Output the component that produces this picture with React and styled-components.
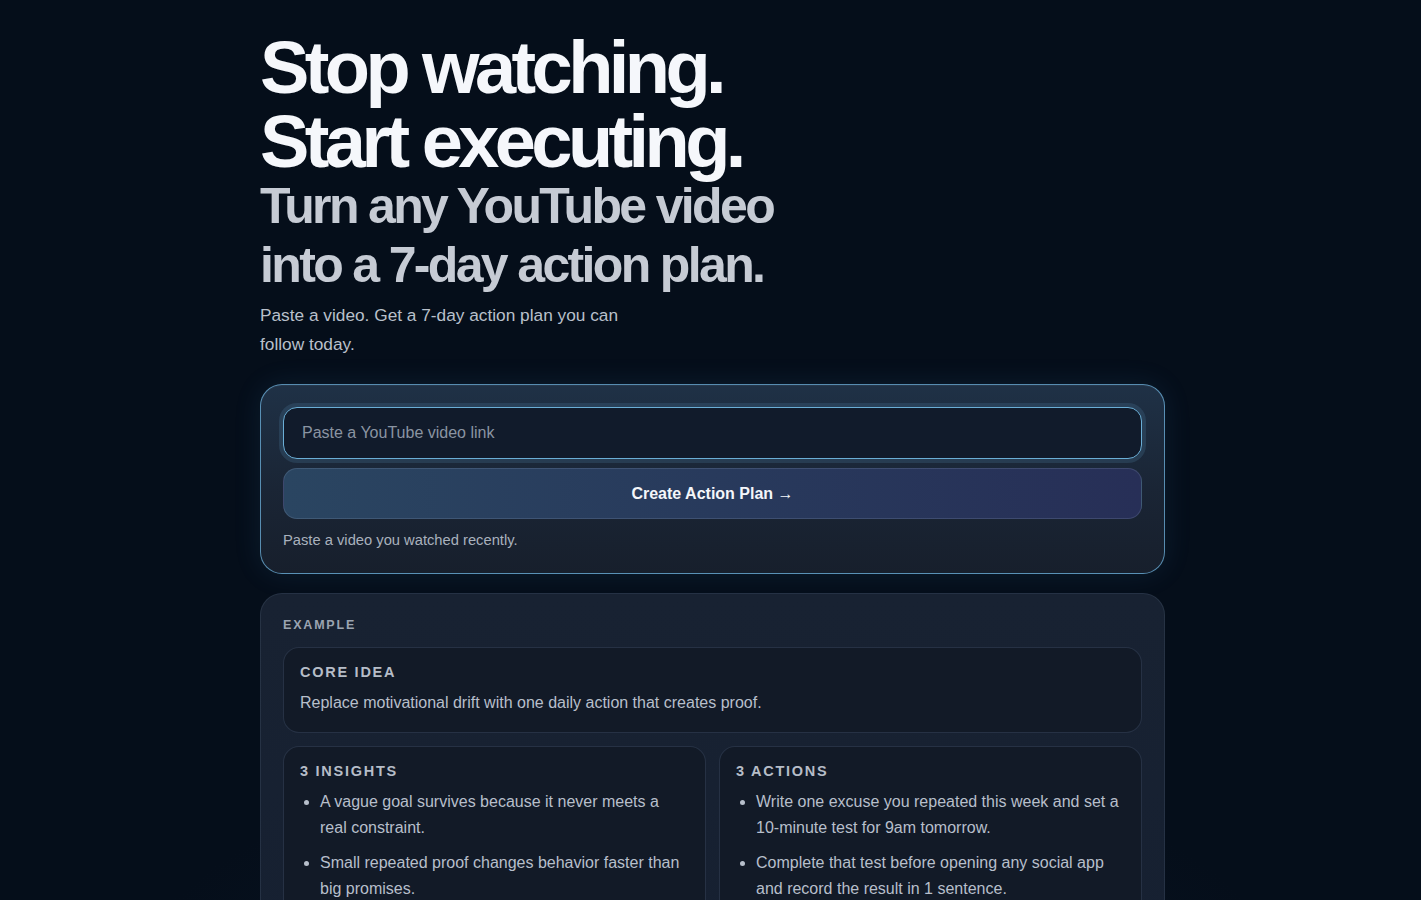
import React from "react";
import styled, { createGlobalStyle } from "styled-components";

const GlobalStyle = createGlobalStyle`
  * { box-sizing: border-box; }
  html, body {
    margin: 0;
    padding: 0;
    background: #050e1a;
    font-family: "Liberation Sans", Arial, sans-serif;
    color: #f5f7fb;
  }
`;

const Page = styled.main`
  min-height: 100vh;
  background: radial-gradient(ellipse 60% 40% at 50% 100%, #0a1727 0%, #050e1a 70%);
  padding: 31px 0 40px;
`;

const Wrap = styled.div`
  width: 905px;
  margin-left: calc(50% - 450.5px);
`;

const Headline = styled.h1`
  margin: 0;
  font-size: 74px;
  line-height: 1;
  font-weight: 700;
  letter-spacing: -0.062em;
  color: #f5f7fb;
`;

const Subhead = styled.h2`
  margin: -2px 0 0;
  font-size: 50px;
  line-height: 59px;
  font-weight: 700;
  letter-spacing: -0.053em;
  color: #c6cbd4;
`;

const Lead = styled.p`
  margin: 6px 0 0;
  max-width: 385px;
  font-size: 17.28px;
  line-height: 29px;
  color: #b9c0cb;
`;

const Panel = styled.section`
  margin-top: 25px;
  border-radius: 22px;
  border: 1px solid ${({ $glow }) => ($glow ? "rgba(110, 178, 220, 0.75)" : "rgba(120, 140, 170, 0.16)")};
  background: ${({ $glow }) =>
    $glow
      ? "linear-gradient(180deg, #1f3146 0%, #1a2535 55%, #171f2c 100%)"
      : "linear-gradient(180deg, #182232 0%, #162031 100%)"};
  box-shadow: ${({ $glow }) =>
    $glow ? "0 0 28px rgba(70, 140, 200, 0.12), inset 0 1px 0 rgba(255,255,255,0.04)" : "none"};
  padding: ${({ $glow }) => ($glow ? "22px 22px 24px" : "22px 22px 0")};
  & + & {
    margin-top: 19px;
  }
`;

const Form = styled.form`
  display: flex;
  flex-direction: column;
  gap: 9px;
`;

const UrlInput = styled.input`
  height: 52px;
  width: 100%;
  border-radius: 14px;
  border: 1px solid #6aaed6;
  background: #111b2b;
  box-shadow: 0 0 0 4px rgba(80, 130, 170, 0.22);
  padding: 0 18px;
  font-family: inherit;
  font-size: 16px;
  color: #e6ebf2;
  outline: none;
  caret-color: #e6ebf2;
  &::placeholder {
    color: #8a94a2;
  }
`;

const Submit = styled.button`
  height: 51px;
  border-radius: 14px;
  border: 1px solid rgba(150, 170, 200, 0.2);
  background: linear-gradient(90deg, #2a4561 0%, #283a5c 50%, #272f57 100%);
  color: #f4f6fa;
  font-family: inherit;
  font-size: 16px;
  font-weight: 700;
  cursor: pointer;
`;

const Hint = styled.p`
  margin: 12px 0 0;
  font-size: 14.72px;
  line-height: 18px;
  color: #a9b1bd;
`;

const Label = styled.div`
  font-size: ${({ $size }) => $size || "12.5px"};
  font-weight: 700;
  letter-spacing: ${({ $spacing }) => $spacing || "0.145em"};
  text-transform: uppercase;
  color: ${({ $color }) => $color || "#9ba4b1"};
  line-height: 18px;
`;

const Stack = styled.div`
  display: flex;
  flex-direction: column;
  gap: 13px;
  margin-top: 13px;
`;

const Box = styled.div`
  border-radius: 16px;
  border: 1px solid rgba(80, 100, 130, 0.32);
  background: #121a27;
  padding: ${({ $pad }) => $pad || "15px 16px 17px"};
`;

const Columns = styled.div`
  display: grid;
  grid-template-columns: 1fr 1fr;
  gap: 13px;
`;

const BodyText = styled.p`
  margin: 10px 0 0;
  font-size: 16px;
  line-height: 24px;
  color: #b7bfcb;
`;

const List = styled.ul`
  margin: 9px 0 0;
  padding-left: 20px;
`;

const Item = styled.li`
  font-size: 16px;
  line-height: 26px;
  color: #b7bfcb;
  & + & {
    margin-top: 9px;
  }
`;

const insights = [
  "A vague goal survives because it never meets a real constraint.",
  "Small repeated proof changes behavior faster than big promises.",
  "Clarity comes from action, not from more information.",
];

const actions = [
  "Write one excuse you repeated this week and set a 10-minute test for 9am tomorrow.",
  "Complete that test before opening any social app and record the result in 1 sentence.",
  "Repeat the same test for 7 days and review what changed on day 7.",
];

function ListCard({ title, items }) {
  return (
    <Box $pad="15px 16px 20px">
      <Label $size="14.5px" $spacing="0.12em" $color="#b6bdc8">
        {title}
      </Label>
      <List>
        {items.map((text) => (
          <Item key={text}>{text}</Item>
        ))}
      </List>
    </Box>
  );
}

export default function App() {
  return (
    <>
      <GlobalStyle />
      <Page>
        <Wrap>
          <Headline>
            Stop watching.
            <br />
            Start executing.
          </Headline>
          <Subhead>
            Turn any YouTube video
            <br />
            into a 7-day action plan.
          </Subhead>
          <Lead>Paste a video. Get a 7-day action plan you can follow today.</Lead>

          <Panel $glow>
            <Form onSubmit={(e) => e.preventDefault()}>
              <UrlInput type="url" placeholder="Paste a YouTube video link" autoFocus />
              <Submit type="submit">Create Action Plan →</Submit>
            </Form>
            <Hint>Paste a video you watched recently.</Hint>
          </Panel>

          <Panel>
            <Label>Example</Label>
            <Stack>
              <Box>
                <Label $size="14.5px" $spacing="0.12em" $color="#b6bdc8">
                  Core Idea
                </Label>
                <BodyText>Replace motivational drift with one daily action that creates proof.</BodyText>
              </Box>
              <Columns>
                <ListCard title="3 Insights" items={insights} />
                <ListCard title="3 Actions" items={actions} />
              </Columns>
            </Stack>
          </Panel>
        </Wrap>
      </Page>
    </>
  );
}
